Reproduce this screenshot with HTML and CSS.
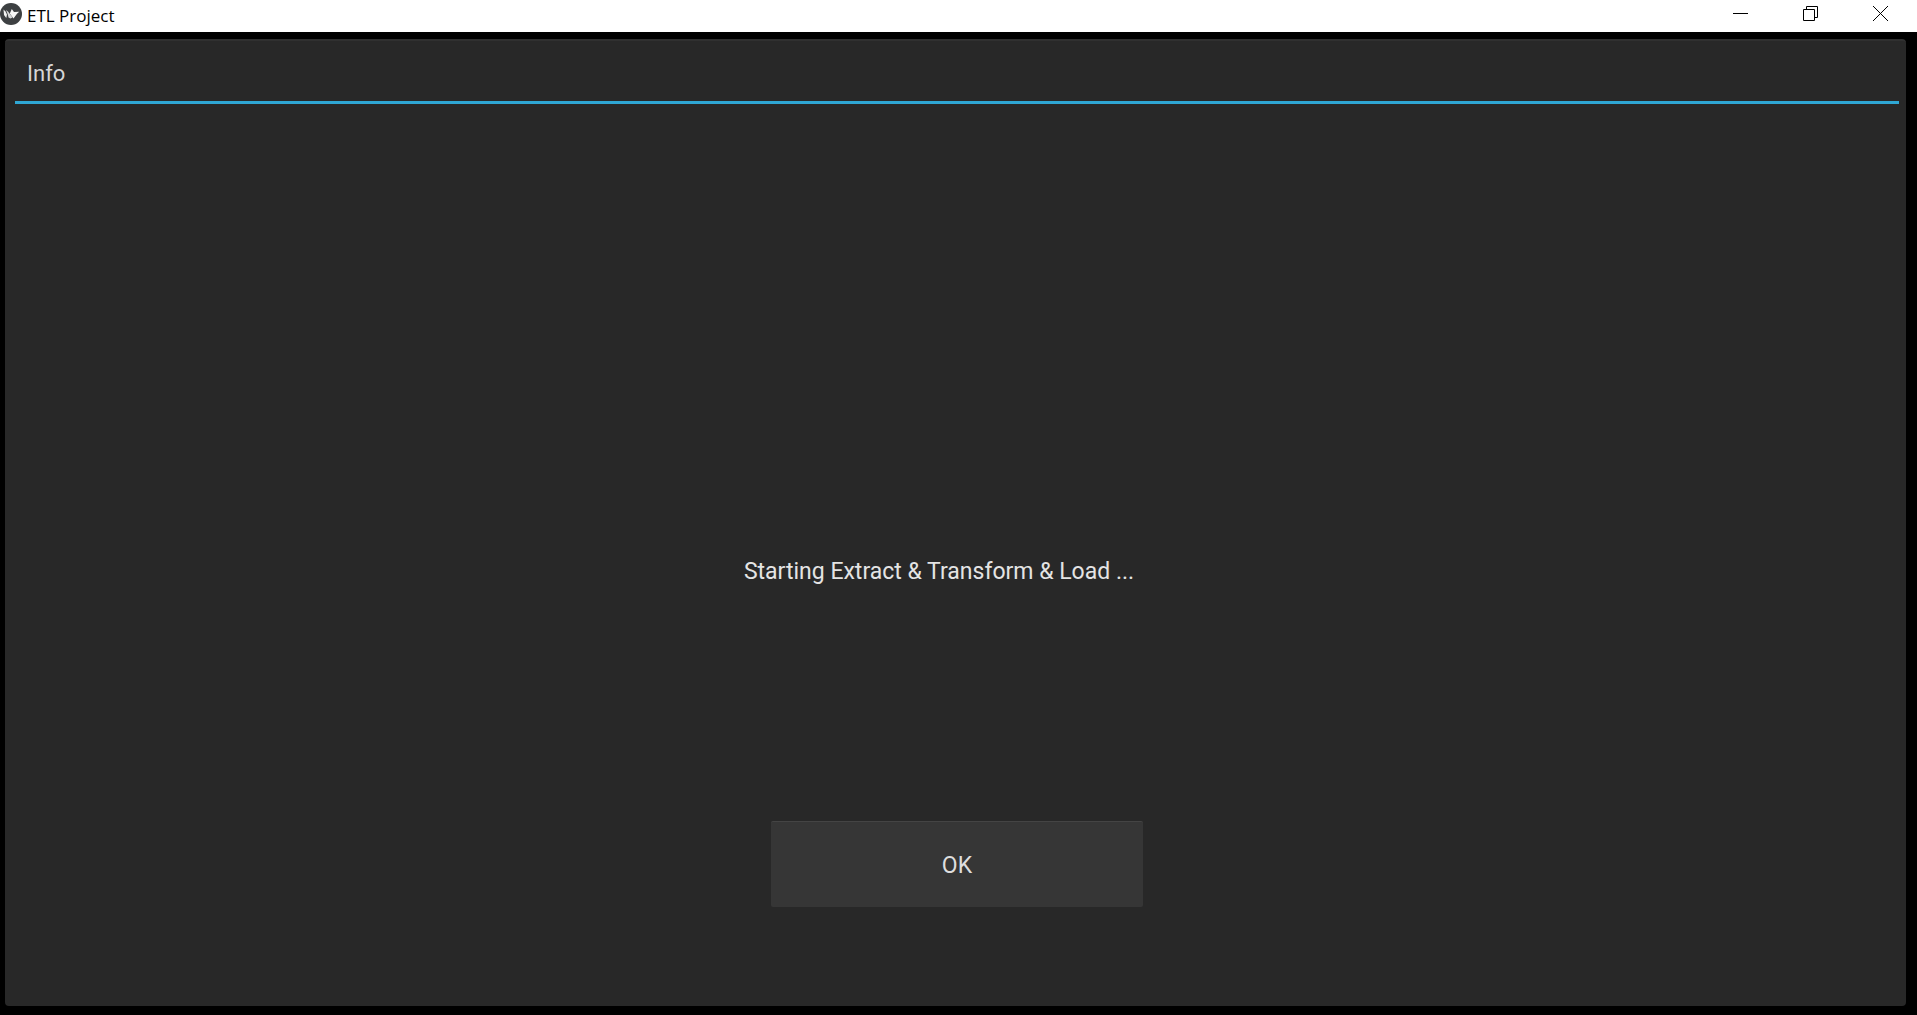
FILE: index.html
```html
<!DOCTYPE html>
<html lang="en">
<head>
<meta charset="utf-8">
<title>ETL Project</title>
<link rel="stylesheet" href="styles.css">
</head>
<body>
<header class="titlebar">
  <svg class="app-icon" viewBox="0 0 22 22" aria-hidden="true">
    <circle cx="11" cy="11" r="11" fill="#3d4042"/>
    <path d="M3.500 6.500 L5.500 8.500 L7 11.500 L6.300 15 L4 12 Z" fill="#f4f4f4"/>
    <path d="M6 7 L8 8.500 L12.500 14.500 L10.500 15.500 L8.500 14.500 L7.800 11.500 Z" fill="#d9dadb"/>
    <path d="M11.800 6 L14 9 L19.200 8.800 L17 10.800 L13.500 15.500 L9.800 10.500 Z" fill="#f7f7f7"/>
  </svg>
  <h1 class="app-title">ETL Project</h1>
  <div class="window-controls">
    <button class="window-button" type="button" aria-label="Minimize">
      <svg class="window-glyph" viewBox="0 0 15 15"><path d="M0 7.500H15"/></svg>
    </button>
    <button class="window-button" type="button" aria-label="Restore">
      <svg class="window-glyph" viewBox="0 0 15 15"><path d="M.5 3.500H11.500V14.500H.5ZM3.500 3.500V.5H14.500V11.500H11.500"/></svg>
    </button>
    <button class="window-button" type="button" aria-label="Close">
      <svg class="window-glyph" viewBox="0 0 15 15"><path d="M0 0L15 15M15 0L0 15"/></svg>
    </button>
  </div>
</header>
<main class="stage">
  <section class="popup" role="dialog" aria-labelledby="popup-title">
    <h2 class="popup-title" id="popup-title">Info</h2>
    <div class="popup-body">
      <p class="message">Starting Extract &amp; Transform &amp; Load ...</p>
      <button class="ok-button" type="button">OK</button>
    </div>
  </section>
</main>
</body>
</html>
```
FILE: styles.css
```css
* {
  box-sizing: border-box;
}

body {
  display: flex;
  flex-direction: column;
  min-height: 100vh;
  margin: 0;
  background: #000;
  font-family: Roboto, sans-serif;
}

.titlebar {
  display: flex;
  align-items: center;
  height: 32px;
  padding-right: 2px;
  background: #fff;
  color: #000;
}

.app-icon {
  width: 22px;
  height: 22px;
  margin-bottom: 4px;
}

.app-title {
  margin: 0 0 0 5px;
  font: 400 17px/32px "Open Sans", sans-serif;
}

.window-controls {
  display: flex;
  margin-left: auto;
}

.window-button {
  display: flex;
  justify-content: center;
  width: 70px;
  height: 32px;
  padding: 6px 0 0;
  border: 0;
  background: none;
}

.window-glyph {
  width: 15px;
  height: 15px;
  fill: none;
  stroke: #000;
  stroke-width: 1px;
}

.stage {
  display: flex;
  flex: 1;
  padding: 7px 11px 9px 5px;
}

.popup {
  display: flex;
  flex: 1;
  flex-direction: column;
  padding: 0 7px 0 10px;
  border-top: 2px solid #303030;
  border-radius: 4px;
  background: #282828;
}

.popup-title {
  margin: 0;
  padding: 20px 12px 14px;
  border-bottom: 3px solid #2fa7d4;
  color: #d6d6d6;
  font-size: 22px;
  font-weight: 400;
  line-height: 26px;
}

.popup-body {
  display: grid;
  flex: 1;
  grid-template-rows: 1fr 86px;
  justify-items: center;
  padding: 218px 0 99px;
}

.message {
  align-self: center;
  margin: 0;
  padding-right: 36px;
  color: #e4e4e4;
  font-size: 23px;
  line-height: 28px;
}

.ok-button {
  width: 372px;
  padding: 3px 0 0;
  border: 0;
  border-top: 1px solid #444;
  border-radius: 2px;
  background: #363636;
  color: #dedede;
  font: 400 23px/28px Roboto, sans-serif;
}
```
